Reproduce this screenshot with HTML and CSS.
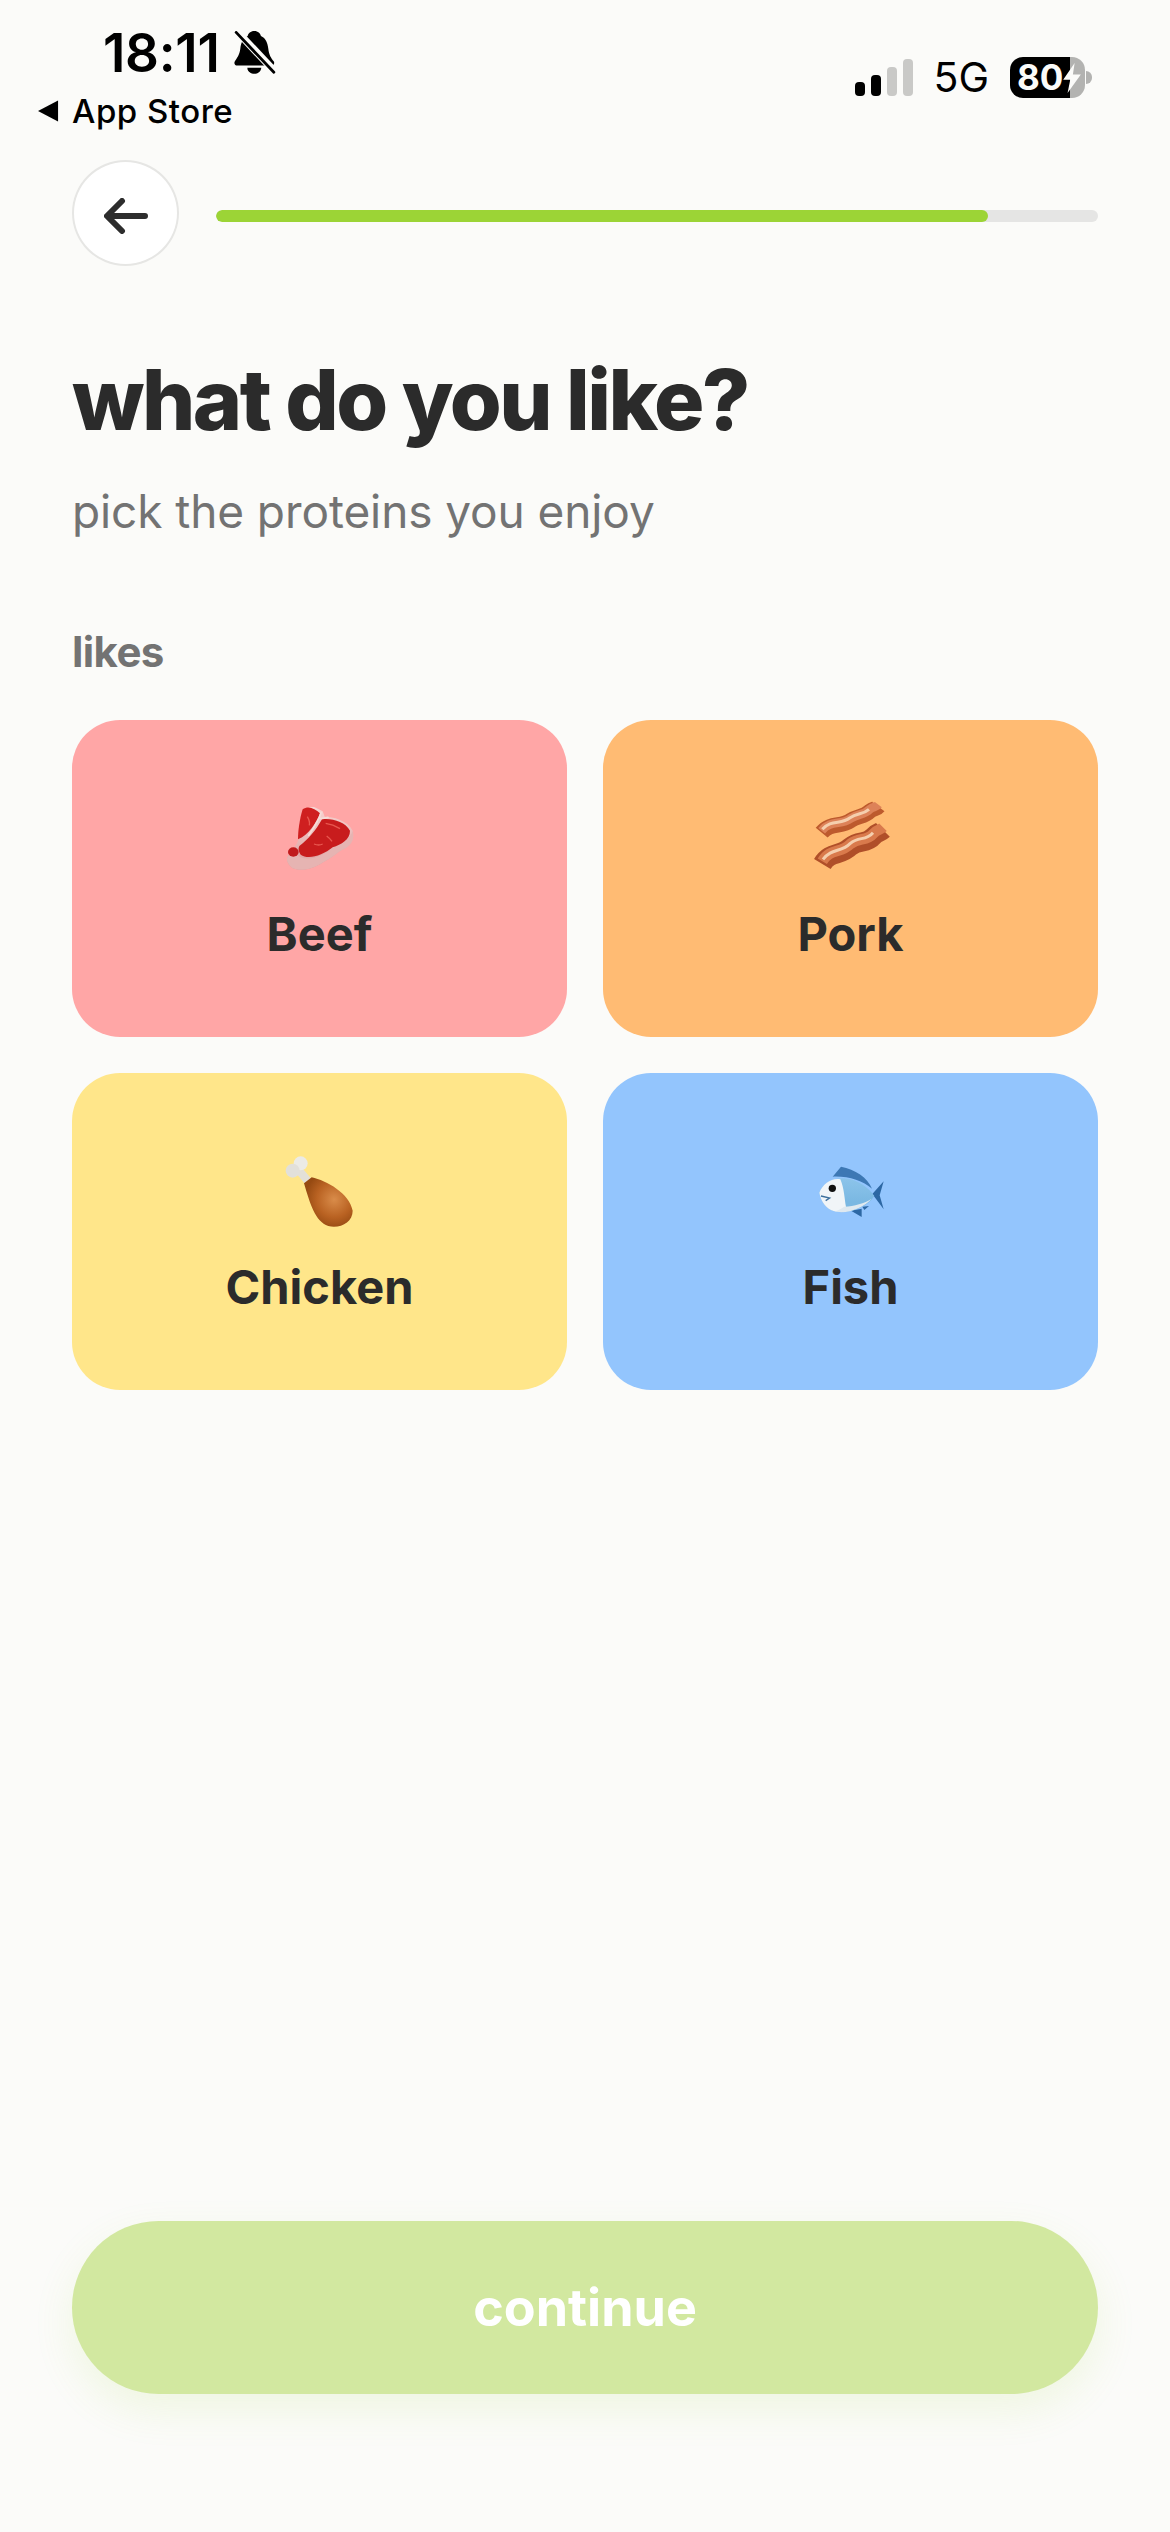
FILE: index.html
```html
<!DOCTYPE html>
<html lang="en">
<head>
    <meta charset="UTF-8">
    <meta name="viewport" content="width=device-width, initial-scale=1.0">
    <title>what do you like?</title>
    <link rel="stylesheet" href="styles.css">
</head>
<body>

    <div class="page">
        <!-- status bar -->
        <div class="status">
            <div class="status-left">
                <div class="time-row">
                    <span class="time">18:11</span>
                    <svg class="bell" viewBox="0 0 120 126">
                        <path d="M58 0C47 0 41 7 39 14C25 20 20 34 18 50C16 68 8 78 2 87C-1 94 3 99 10 99H106C113 99 117 94 114 87C106 78 100 68 98 50C96 34 91 20 77 14C75 7 69 0 58 0Z" fill="#000"/>
                        <path d="M38 105C40 128 76 128 78 105Z" fill="#000"/>
                        <path d="M0 -8L124 124" stroke="#fbfbf9" stroke-width="21"/>
                        <path d="M6 4L114 118" stroke="#000" stroke-width="8" stroke-linecap="round"/>
                    </svg>
                </div>
                <div class="back-app">
                    <svg class="back-tri" viewBox="0 0 22 22"><path d="M0 11L21 0V22Z" fill="#000"/></svg>
                    <span>App Store</span>
                </div>
            </div>
            <div class="status-right">
                <div class="signal">
                    <span class="bar b1"></span>
                    <span class="bar b2"></span>
                    <span class="bar b3"></span>
                    <span class="bar b4"></span>
                </div>
                <span class="network">5G</span>
                <div class="battery">
                    <span class="battery-num">80</span>
                    <svg class="bolt" viewBox="0 0 20 34"><path d="M13 0L0 19H8L5 34L20 13H11Z" fill="#fbfbf9"/></svg>
                    <span class="battery-nub"></span>
                </div>
            </div>
        </div>

        <!-- progress -->
        <div class="topbar">
            <button class="back-btn">
                <svg class="back-arrow" viewBox="0 0 44 36">
                    <path d="M41 18H4M18 3L3 18L18 33" fill="none" stroke="#2d2d2d" stroke-width="6" stroke-linecap="round" stroke-linejoin="round"/>
                </svg>
            </button>
            <div class="progress"><div class="progress-fill" style="width: 87.5%"></div></div>
        </div>

        <h1 class="title">what do you like?</h1>
        <p class="subtitle">pick the proteins you enjoy</p>
        <h2 class="section">likes</h2>

        <div class="grid">
            <div class="card beef">
                <svg class="emoji" viewBox="28 30 360 330">
                    <defs>
                        <linearGradient id="fat" x1="0" y1="0" x2="0" y2="1">
                            <stop offset="0" stop-color="#f7d4d2"/>
                            <stop offset="1" stop-color="#dc9c9c"/>
                        </linearGradient>
                    </defs>
                    <path d="M110 262C118 245 135 232 142 212L148 150C156 122 172 108 192 112L216 124L222 140C245 140 290 150 306 182C312 208 302 226 278 238C258 248 245 264 215 278C190 296 150 306 125 294C114 286 106 272 110 262Z" fill="url(#fat)"/>
                    <path d="M110 262C118 250 128 248 150 262C185 275 225 250 250 232C275 222 300 205 306 182C312 208 302 226 278 238C258 248 245 264 215 278C190 296 150 306 125 294C114 286 106 272 110 262Z" fill="#e6b4b2"/>
                    <path d="M142 208C142 185 146 150 156 118C172 106 192 114 208 130C198 156 176 194 142 208Z" fill="#cf1f20"/>
                    <path d="M146 228C175 206 195 182 214 148C244 144 284 156 298 182C298 210 272 222 246 232C216 257 172 270 150 254C143 244 142 236 146 228Z" fill="#c81c1d"/>
                    <path d="M225 160C240 162 255 168 268 176M228 198C236 204 240 208 244 214M170 140C176 150 178 158 176 166M190 222C200 226 208 226 216 222" stroke="#e8574f" stroke-width="4" fill="none"/>
                    <ellipse cx="128" cy="246" rx="16" ry="14" fill="#c01a1c"/>
                    <path d="M211 128C204 152 190 172 174 196M206 144C212 146 224 144 232 142" stroke="#f6dcd8" stroke-width="5" fill="none" stroke-linecap="round"/>
                </svg>
                <span class="card-label">Beef</span>
            </div>
            <div class="card pork">
                <svg class="emoji" viewBox="0 0 360 330">
                    <g fill="none">
                        <path d="M92 158C118 126 150 142 178 122C202 106 218 112 236 94C248 84 256 88 262 80" stroke="#bd5a2d" stroke-width="46"/>
                        <path d="M92 152C118 120 150 136 178 116C202 100 218 106 236 88C248 78 256 82 262 74" stroke="#dd8258" stroke-width="26"/>
                        <path d="M94 148C120 118 150 134 176 114C200 98 216 104 234 88" stroke="#f5cfae" stroke-width="9"/>
                        <path d="M94 252C118 212 148 230 178 200C205 178 226 194 248 168C258 156 268 158 276 150" stroke="#b04f29" stroke-width="58"/>
                        <path d="M94 244C118 204 148 222 178 192C205 170 226 186 248 160C258 148 268 150 276 142" stroke="#d97a4c" stroke-width="32"/>
                        <path d="M96 238C122 204 150 218 178 190C204 168 224 184 246 158" stroke="#f5cfae" stroke-width="9"/>
                    </g>
                </svg>
                <span class="card-label">Pork</span>
            </div>
            <div class="card chicken">
                <svg class="emoji" viewBox="0 -21 360 330">
                    <defs>
                        <radialGradient id="meat" cx="0.62" cy="0.45" r="0.6">
                            <stop offset="0" stop-color="#d98c4a"/>
                            <stop offset="0.6" stop-color="#b96222"/>
                            <stop offset="1" stop-color="#964a12"/>
                        </radialGradient>
                    </defs>
                    <path d="M112 85L145 125" stroke="#e3e0d8" stroke-width="24"/>
                    <circle cx="122" cy="70" r="21" fill="#ecebe6"/>
                    <circle cx="98" cy="92" r="21" fill="#e2e0da"/>
                    <path d="M132 130L155 112C200 122 268 160 278 212C278 248 240 266 205 258C165 245 150 190 132 130Z" fill="url(#meat)"/>
                </svg>
                <span class="card-label">Chicken</span>
            </div>
            <div class="card fish">
                <svg class="emoji" viewBox="0 -21 360 330">
                    <defs>
                        <linearGradient id="fishbody" x1="0" y1="0" x2="0" y2="1">
                            <stop offset="0" stop-color="#8cc4ea"/>
                            <stop offset="0.7" stop-color="#7ab8e2"/>
                        </linearGradient>
                    </defs>
                    <path d="M125 110L150 80C192 88 230 112 243 146C215 122 172 108 125 110Z" fill="#3d78b4"/>
                    <path d="M244 162L278 124L266 166L278 208Z" fill="#2d68a4"/>
                    <path d="M180 212L212 206L212 231ZM214 200L234 198L220 210Z" fill="#2d68a4"/>
                    <path d="M85 158C95 130 125 112 160 115C200 118 235 145 250 168C230 202 170 224 130 214C105 207 90 185 85 158Z" fill="url(#fishbody)"/>
                    <path d="M85 158C95 130 125 112 148 118C160 145 160 175 165 200C150 214 145 216 130 214C105 207 90 185 85 158Z" fill="#f1f5f8"/>
                    <path d="M160 200C190 198 220 190 242 176C218 202 170 224 130 214C142 212 150 206 160 200Z" fill="#dfe9f0"/>
                    <circle cx="124" cy="145" r="11" fill="#111"/>
                    <path d="M90 168L116 174L104 182" fill="none" stroke="#3d6f9c" stroke-width="4"/>
                </svg>
                <span class="card-label">Fish</span>
            </div>
        </div>

        <button class="continue">continue</button>
    </div>

</body>
</html>
```

FILE: styles.css
```css
/* general */
body {
    margin: 0;
    font-family: 'Inter', sans-serif;
    background-color: #fbfbf9;
    color: #2b2b2b;
}

.page {
    height: 2532px;
    box-sizing: border-box;
    padding: 0 72px 138px;
    display: flex;
    flex-direction: column;
    overflow: hidden;
}

/* status bar */
.status {
    display: flex;
    justify-content: space-between;
    height: 160px;
    margin: 0 -72px;
    color: #000;
}

.status-left {
    padding: 24px 0 0 38px;
}

.time-row {
    display: flex;
    align-items: center;
    gap: 14px;
    padding-left: 65px;
    height: 58px;
}

.time {
    font-size: 53px;
    font-weight: 600;
    letter-spacing: -0.3px;
}

.bell {
    width: 42px;
    height: 44px;
}

.back-app {
    display: flex;
    align-items: center;
    gap: 13px;
    margin-top: 9px;
    font-size: 33px;
    font-weight: 500;
    letter-spacing: 0.5px;
}

.back-tri {
    width: 21px;
    height: 22px;
}

.status-right {
    display: flex;
    align-items: center;
    height: 41px;
    margin-top: 57px;
    padding-right: 85px;
}

.signal {
    display: flex;
    align-items: flex-end;
    gap: 6px;
    height: 37px;
    margin-right: 20px;
}

.bar {
    width: 10px;
    border-radius: 4px;
    background-color: #000;
}

.b1 { height: 14px; }
.b2 { height: 21px; }
.b3 { height: 29px; background-color: #c9c9c7; }
.b4 { height: 37px; background-color: #c9c9c7; }

.network {
    font-size: 41px;
    line-height: 41px;
    margin-right: 21px;
}

.battery {
    position: relative;
    width: 75px;
    height: 41px;
    border-radius: 13px;
    background: linear-gradient(to right, #000 80%, #b3b3b1 80%);
    color: #fbfbf9;
    font-size: 35px;
    font-weight: 700;
    line-height: 41px;
}

.battery-num {
    padding-left: 7px;
}

.bolt {
    position: absolute;
    left: 53px;
    top: 6px;
    width: 18px;
    height: 30px;
}

.battery-nub {
    position: absolute;
    right: -7px;
    top: 14px;
    width: 6px;
    height: 13px;
    border-radius: 0 6px 6px 0;
    background-color: #b3b3b1;
}

/* progress */
.topbar {
    display: flex;
    align-items: center;
    gap: 37px;
    height: 106px;
}

.back-btn {
    width: 107px;
    height: 106px;
    padding: 0;
    flex: none;
    border: 2px solid #e6e6e4;
    border-radius: 50%;
    background-color: #fff;
    display: flex;
    align-items: center;
    justify-content: center;
}

.back-arrow {
    width: 44px;
    height: 36px;
    margin-top: 6px;
}

.progress {
    flex: 1;
    height: 12px;
    margin-top: 6px;
    border-radius: 6px;
    background-color: #e5e5e4;
    overflow: hidden;
}

.progress-fill {
    height: 100%;
    border-radius: 6px;
    background-color: #9cd436;
}

/* headings */
.title {
    margin: 84px 0 0;
    font-size: 84px;
    line-height: 100px;
    font-weight: 800;
    letter-spacing: -2.5px;
}

.subtitle {
    margin: 32px 0 0;
    font-size: 46px;
    line-height: 58px;
    font-weight: 400;
    letter-spacing: -0.1px;
    color: #737373;
}

.section {
    margin: 87px 0 0;
    font-size: 42px;
    line-height: 50px;
    font-weight: 700;
    letter-spacing: -0.6px;
    color: #737373;
}

/* cards */
.grid {
    display: grid;
    grid-template-columns: 1fr 1fr;
    gap: 36px;
    margin-top: 43px;
}

.card {
    height: 317px;
    box-sizing: border-box;
    padding-top: 60px;
    border-radius: 48px;
    display: flex;
    flex-direction: column;
    align-items: center;
}

.beef { background-color: #ffa6a6; }
.pork { background-color: #ffbb73; }
.chicken { background-color: #ffe68a; }
.fish { background-color: #93c5fd; }

.emoji {
    width: 120px;
    height: 110px;
    flex: none;
}

.card-label {
    margin-top: 15px;
    font-size: 47px;
    line-height: 58px;
    font-weight: 700;
}

/* button */
.continue {
    margin-top: auto;
    height: 173px;
    border: none;
    border-radius: 87px;
    background-color: #d2e8a0;
    color: #fff;
    font-family: 'Inter', sans-serif;
    font-size: 52px;
    font-weight: 700;
    box-shadow: 0 16px 40px rgba(156, 212, 54, 0.12);
}
```
